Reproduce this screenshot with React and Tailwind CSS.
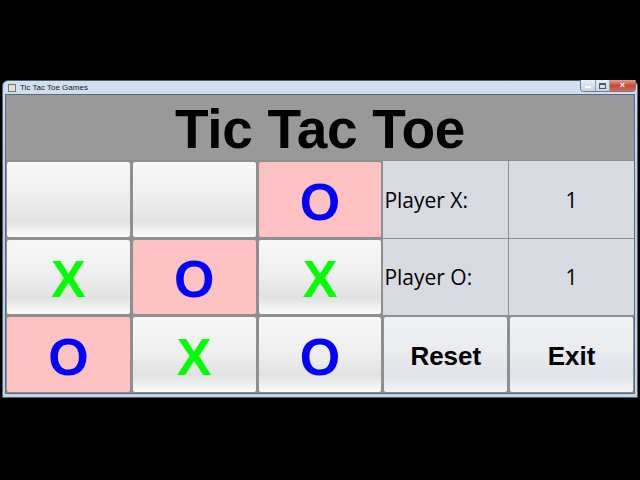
import React from "react";

// one board square: either a Swing-style button or a pink "taken" cell
function Square({ mark, taken }) {
  const color = mark === "X" ? "text-[#00ff00]" : "text-[#0000ff]";
  return (
    <div
      className={`flex items-center justify-center rounded-[3px] border border-[#8f9090] pt-[5px] ${
        taken
          ? "bg-[#ffc2c2]"
          : "bg-[linear-gradient(to_bottom,#f7f7f7_0%,#efefef_45%,#e2e2e2_78%,#fbfbfb_100%)]"
      }`}
    >
      <span className={`text-[52px] font-bold leading-none ${color}`}>{mark}</span>
    </div>
  );
}

function Label({ children, center }) {
  return (
    <div
      className={`flex items-center bg-[#d7dae0] text-[21px] text-black pt-[2px] ${
        center ? "justify-center" : "pl-px"
      }`}
      style={{ fontFamily: '"Open Sans", sans-serif' }}
    >
      {children}
    </div>
  );
}

function ActionButton({ children }) {
  return (
    <div className="flex items-center justify-center rounded-[3px] border border-[#8f9090] pt-[4px] bg-[linear-gradient(to_bottom,#f1f2f5_0%,#e9ebef_45%,#dfe2e8_78%,#f4f5f8_100%)]">
      <span className="text-[26px] font-bold text-black">{children}</span>
    </div>
  );
}

export default function App() {
  const board = [
    ["", false],
    ["", false],
    ["O", true],
    ["X", false],
    ["O", true],
    ["X", false],
    ["O", true],
    ["X", false],
    ["O", false],
  ];

  const cell = (i) => <Square key={i} mark={board[i][0]} taken={board[i][1]} />;

  return (
    <div
      className="w-[640px] h-[480px] bg-black pt-[80px] pl-[2px]"
      style={{ fontFamily: '"Liberation Sans", Arial, sans-serif' }}
    >
      {/* window frame */}
      <div className="w-[636px] h-[318px] flex flex-col rounded-t-[6px] border border-[#4f6074] bg-[linear-gradient(to_bottom,#cfe0f1,#b8cfe6_40%,#c2d6ea)] px-[2px] pb-[3px]">
        {/* title bar */}
        <div className="h-[13px] flex items-center relative">
          <div className="w-[8px] h-[8px] ml-[3px] border border-[#7a7a7a] bg-[#e8e0d0]" />
          <span className="ml-[4px] text-[8px] leading-none text-[#1c1c1c]">Tic Tac Toe Games</span>
          <div className="absolute right-[-1px] top-[-1px] flex h-[12px] rounded-b-[4px] overflow-hidden border border-t-0 border-[#6b7d92]">
            <div className="w-[15px] flex items-end justify-center pb-[3px] bg-[linear-gradient(to_bottom,#e4edf7,#c5d5e7)] border-r border-[#8fa0b4]">
              <div className="w-[6px] h-[2px] bg-[#555] border border-white" />
            </div>
            <div className="w-[14px] flex items-center justify-center bg-[linear-gradient(to_bottom,#e4edf7,#c5d5e7)] border-r border-[#8fa0b4]">
              <div className="w-[7px] h-[6px] border border-[#555] border-t-2" />
            </div>
            <div className="w-[25px] flex items-center justify-center bg-[linear-gradient(to_bottom,#e8a08e,#c84a33_50%,#d06a52)] text-white text-[9px] font-bold leading-none">
              ×
            </div>
          </div>
        </div>

        {/* content */}
        <div className="flex-1 flex flex-col border border-[#5b6b7c] bg-[#9a9a9a]">
          <div className="h-[65px] flex items-center justify-center bg-[#999999] pt-[4px]">
            <span className="text-[55px] font-bold leading-none text-black tracking-[-0.3px]">
              Tic Tac Toe
            </span>
          </div>
          <div className="flex-1 grid grid-cols-5 grid-rows-3 gap-px bg-[#8e8e8e] pt-px">
            {cell(0)}
            {cell(1)}
            {cell(2)}
            <Label>Player X:</Label>
            <Label center>1</Label>
            {cell(3)}
            {cell(4)}
            {cell(5)}
            <Label>Player O:</Label>
            <Label center>1</Label>
            {cell(6)}
            {cell(7)}
            {cell(8)}
            <ActionButton>Reset</ActionButton>
            <ActionButton>Exit</ActionButton>
          </div>
        </div>
      </div>
    </div>
  );
}
